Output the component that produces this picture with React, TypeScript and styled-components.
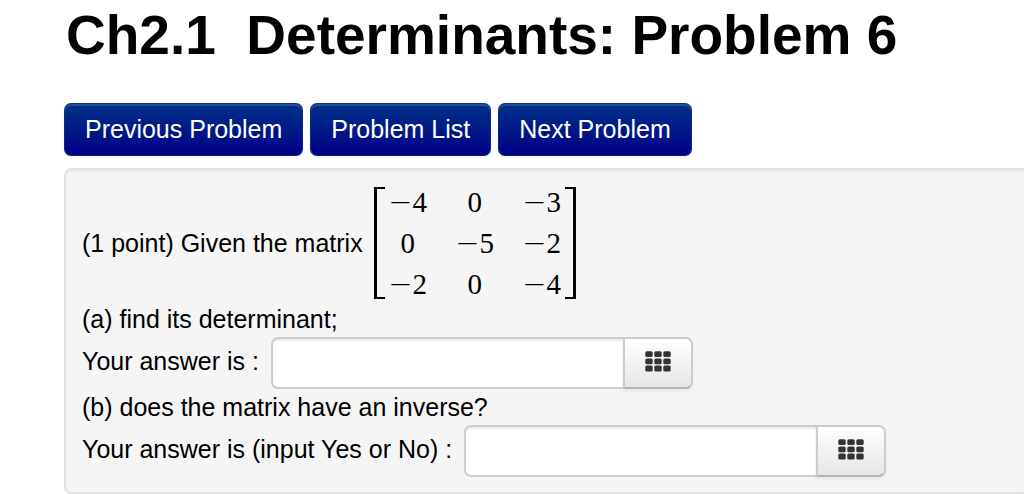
import React from "react";
import styled, { createGlobalStyle } from "styled-components";

const GlobalStyle = createGlobalStyle`
  *, *::before, *::after { box-sizing: border-box; }
  body {
    margin: 0;
    background: #fff;
    color: #000;
    font-family: "Liberation Sans", Arial, sans-serif;
    font-size: 25px;
    line-height: 36px;
    overflow-x: hidden;
  }
`;

const Page = styled.main`
  padding-left: 64px;
`;

const Title = styled.h1`
  margin: 0;
  padding: 0 0 33px 2px;
  font-size: 55px;
  line-height: 70px;
  font-weight: 700;
  white-space: pre-wrap;
`;

const ProblemNav = styled.nav`
  display: flex;
  flex-wrap: wrap;
  gap: 7px;
  margin-bottom: 12px;
`;

const NavButton = styled.button`
  height: 53px;
  padding: 0 20px 2px;
  border: 1px solid;
  border-color: #0c3478 #0b2b80 #10207a;
  border-radius: 7px;
  background: linear-gradient(#003388, #000088) border-box;
  box-shadow: inset 0 2px 0 rgba(255, 255, 255, 0.15), 0 2px 3px rgba(0, 0, 0, 0.06);
  color: #fff;
  font: inherit;
  cursor: pointer;
`;

const ProblemPanel = styled.section`
  padding: 17px 16px 15px;
  border: 2px solid #e3e3e3;
  border-right: 0;
  border-radius: 7px 0 0 7px;
  background: #f5f5f5;
  box-shadow: inset 0 2px 2px rgba(0, 0, 0, 0.05);
`;

const Line = styled.p`
  margin: 0;
`;

const Statement = styled.div`
  display: flex;
  align-items: center;
  gap: 11px;
  padding-bottom: 2px;
`;

const Matrix = styled.div`
  display: flex;
`;

const Bracket = styled.span<{ $side: "left" | "right" }>`
  width: 11px;
  border: solid #000;
  border-width: ${(p) => (p.$side === "left" ? "2px 0 2px 3px" : "2px 3px 2px 0")};
`;

const MatrixTable = styled.table`
  border-collapse: collapse;
  margin: -5px 0 -6px;
`;

const Cell = styled.td`
  min-width: 88px;
  height: 41px;
  padding: 0;
  text-align: center;
  white-space: nowrap;
  font-family: "Liberation Serif", "Times New Roman", serif;
  font-size: 29px;
  line-height: 41px;

  &:first-child,
  &:last-child {
    min-width: 46px;
  }
`;

const Minus = styled.span`
  font-family: "DejaVu Sans", sans-serif;
  font-weight: 200;
  line-height: 1;
`;

const AnswerRow = styled.div`
  display: flex;
  align-items: center;
  gap: 12px;
`;

const AnswerLabel = styled.label`
  padding-bottom: 4px;
`;

const AnswerGroup = styled.div`
  display: flex;
`;

const AnswerInput = styled.input`
  width: 354px;
  height: 52px;
  padding: 0 10px;
  border: 2px solid #ccc;
  border-radius: 7px 0 0 7px;
  background: #fff;
  box-shadow: inset 0 2px 2px rgba(0, 0, 0, 0.075);
  font: inherit;
`;

const KeypadButton = styled.button`
  display: flex;
  align-items: center;
  justify-content: center;
  width: 70px;
  height: 52px;
  margin-left: -2px;
  padding: 0 0 3px;
  border: 2px solid #ccc;
  border-bottom-color: #b3b3b3;
  border-radius: 0 7px 7px 0;
  background: linear-gradient(#ffffff, #e6e6e6);
  box-shadow: 0 2px 3px rgba(0, 0, 0, 0.06);
  cursor: pointer;
`;

const rows = [
  [-4, 0, -3],
  [0, -5, -2],
  [-2, 0, -4],
];

function KeypadIcon() {
  return (
    <svg width="26" height="21" viewBox="0 0 26 21" fill="#333" aria-hidden="true">
      {[0, 7.2, 14.4].map((y) =>
        [0, 9, 18].map((x) => (
          <rect key={`${x}-${y}`} x={x + 0.3} y={y + 0.2} width="7.4" height="5.9" rx="1.5" />
        ))
      )}
    </svg>
  );
}

function AnswerField({ id, label }: { id: string; label: string }) {
  return (
    <AnswerRow>
      <AnswerLabel htmlFor={id}>{label}</AnswerLabel>
      <AnswerGroup>
        <AnswerInput id={id} type="text" autoComplete="off" />
        <KeypadButton type="button" aria-label="Open equation editor">
          <KeypadIcon />
        </KeypadButton>
      </AnswerGroup>
    </AnswerRow>
  );
}

export default function App() {
  return (
    <>
      <GlobalStyle />
      <Page>
        <Title>{"Ch2.1  Determinants: Problem 6"}</Title>
        <ProblemNav>
          <NavButton type="button">Previous Problem</NavButton>
          <NavButton type="button">Problem List</NavButton>
          <NavButton type="button">Next Problem</NavButton>
        </ProblemNav>
        <ProblemPanel>
          <Statement>
            <Line>(1 point) Given the matrix</Line>
            <Matrix>
              <Bracket $side="left" />
              <MatrixTable>
                <tbody>
                  {rows.map((row, r) => (
                    <tr key={r}>
                      {row.map((value, c) => (
                        <Cell key={c}>
                          {value < 0 && <Minus>−</Minus>}
                          {Math.abs(value)}
                        </Cell>
                      ))}
                    </tr>
                  ))}
                </tbody>
              </MatrixTable>
              <Bracket $side="right" />
            </Matrix>
          </Statement>
          <Line>(a) find its determinant;</Line>
          <AnswerField id="determinant" label="Your answer is :" />
          <Line>(b) does the matrix have an inverse?</Line>
          <AnswerField id="inverse" label="Your answer is (input Yes or No) :" />
        </ProblemPanel>
      </Page>
    </>
  );
}
